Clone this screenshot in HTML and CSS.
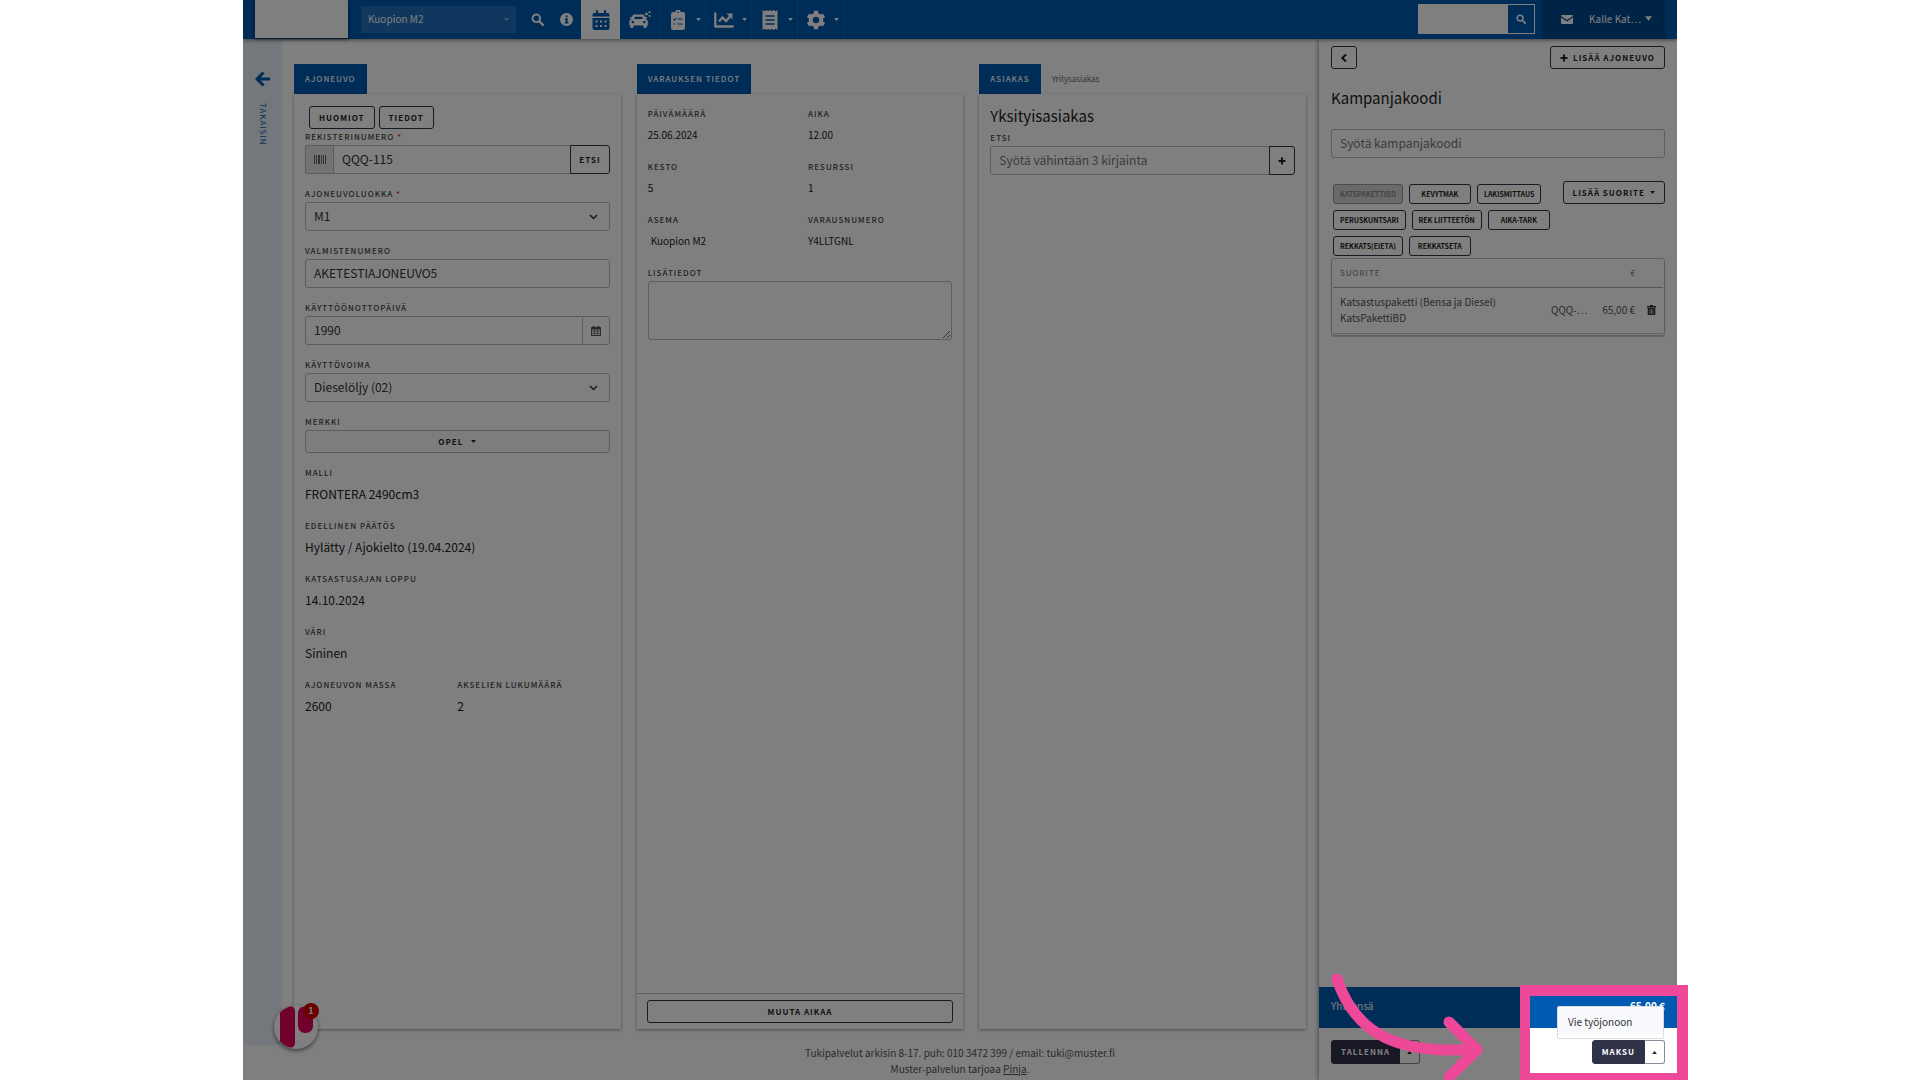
FILE: index.html
```html
<!DOCTYPE html>
<html lang="fi">
<head>
<meta charset="utf-8">
<title>Kuopion M2 – Ajoneuvo</title>
<meta name="viewport" content="width=device-width, initial-scale=1">
<link rel="stylesheet" href="styles.css">
</head>
<body>
<svg class="defs" aria-hidden="true">
  <symbol id="i-search" viewBox="0 0 16 16"><circle cx="6.5" cy="6.5" r="4.7" fill="none" stroke="currentColor" stroke-width="2.4"/><path d="M10 10l4.6 4.6" stroke="currentColor" stroke-width="2.8" stroke-linecap="round"/></symbol>
  <symbol id="i-caret" viewBox="0 0 8 5"><path d="M0 0h8L4 5z" fill="currentColor"/></symbol>
  <symbol id="i-up" viewBox="0 0 8 5"><path d="M0 5h8L4 0z" fill="currentColor"/></symbol>
  <symbol id="i-plus" viewBox="0 0 8 8"><path d="M4 0.5v7M0.5 4h7" stroke="currentColor" stroke-width="2"/></symbol>
</svg>
<div class="stage">
<div class="app">
  <header class="topbar">
    <div class="brand"></div>
    <button class="station" type="button">Kuopion M2<svg class="caret"><use href="#i-caret"/></svg></button>
    <nav class="nav">
      <a class="nav-plain" href="#" aria-label="Haku"><svg class="ic13"><use href="#i-search"/></svg></a>
      <a class="nav-plain" href="#" aria-label="Info"><svg class="ic13" viewBox="0 0 16 16"><circle cx="8" cy="8" r="8" fill="currentColor"/><path d="M7 3h2.4v2.2H7zM6 6.6h3.4v4.6h1v1.6H5.8v-1.6h1V8.2H6z" fill="#005ab0"/></svg></a>
      <a class="nav-tab active" href="#" aria-label="Kalenteri"><svg class="ic20" viewBox="0 0 20 20"><path d="M2.500 3H5V1q0-1 1-1t1 1v2h6V1q0-1 1-1t1 1v2h1.500q2 0 2 1.800V6.500h-17V4.800Q1.500 3 3.500 3zM1.500 8h17v10q0 2-2 2h-13q-2 0-2-2z" fill="currentColor"/><path d="M4.500 10.500h2v2h-2zm4.500 0h2v2H9zm4.500 0h2v2h-2zm-9 4.500h2v2h-2zM9 15h2v2H9zm4.500 0h2v2h-2z" fill="#fff"/></svg></a>
      <a class="nav-tab" href="#" aria-label="Ajoneuvot"><svg class="ic-car" viewBox="0 0 22 18"><path fill-rule="evenodd" d="M5.500 3.500h8q1.500 0 2 1.300L16.800 8q2 .5 2 2.500v4h-1v1.800q0 .7-1.600.7t-1.700-.7v-1.800H4.500v1.800q0 .7-1.700.7t-1.600-.7v-1.800H.3v-4Q.3 8.500 2.200 8l1.300-3.200q.5-1.300 2-1.300zM6 5.700L5 8h9l-1-2.300zM3.800 9.700a1.300 1.300 0 1 0 .01 0zm11.400 0a1.300 1.300 0 1 0 .01 0z" fill="currentColor"/><path d="M1 6h2v1.600H1zm15 0h2v1.600h-2z" fill="currentColor"/><circle cx="17.300" cy="3" r="1.300" fill="currentColor"/><circle cx="20.700" cy="1" r="1" fill="currentColor"/><circle cx="20.700" cy="5" r="1" fill="currentColor"/><path d="M17.300 3l3.400-2M17.300 3l3.400 2" stroke="currentColor" stroke-width=".6"/></svg></a>
      <a class="nav-tab wide" href="#" aria-label="Tehtävät"><svg class="ic20" viewBox="0 0 20 20"><path d="M5 2h2.500a2.500 2.500 0 0 1 5 0H15q2 0 2 2v14q0 2-2 2H5q-2 0-2-2V4q0-2 2-2z" fill="currentColor"/><path d="M5.500 9l1 1 1.600-2M5.500 14h1.600M9.500 9h5M9.500 14h5" stroke="#005ab0" stroke-width="1.200" fill="none"/><circle cx="10" cy="2.500" r=".8" fill="#005ab0"/></svg><svg class="caret"><use href="#i-caret"/></svg></a>
      <a class="nav-tab wide" href="#" aria-label="Raportit"><svg class="ic20" viewBox="0 0 20 20"><path d="M1.300 3.500v13h17.500" stroke="currentColor" stroke-width="2.300" fill="none" stroke-linecap="round" stroke-linejoin="round"/><path d="M5 11.500l3.500-4 3.500 3.500 4-4.500" stroke="currentColor" stroke-width="2.300" fill="none"/><path d="M12.500 3.500h6v6z" fill="currentColor"/></svg><svg class="caret"><use href="#i-caret"/></svg></a>
      <a class="nav-tab wide" href="#" aria-label="Kuitit"><svg class="ic20" viewBox="0 0 20 20"><path d="M2.500 0l2 1.300L6.300 0l1.900 1.300L10 0l1.800 1.300L13.700 0l1.800 1.300 2-1.300v20l-2-1.300-1.800 1.300-1.900-1.300L10 20l-1.800-1.300L6.300 20l-1.800-1.300-2 1.300z" fill="currentColor"/><path d="M5.500 6h9M5.500 10h9M5.500 14h9" stroke="#005ab0" stroke-width="1.300"/></svg><svg class="caret"><use href="#i-caret"/></svg></a>
      <a class="nav-tab wide" href="#" aria-label="Asetukset"><svg class="ic20" viewBox="0 0 20 20"><circle cx="10" cy="10" r="5.300" fill="none" stroke="currentColor" stroke-width="4"/><path d="M10 .8v4M10 15.200v4M2 5.400l3.500 2M14.500 12.600l3.500 2M2 14.600l3.500-2M14.500 7.400l3.500-2" stroke="currentColor" stroke-width="4.200"/></svg><svg class="caret"><use href="#i-caret"/></svg></a>
    </nav>
    <form class="search">
      <input class="search-input" type="text" aria-label="Hae">
      <button class="search-btn" type="button" aria-label="Hae"><svg class="ic10"><use href="#i-search"/></svg></button>
    </form>
    <div class="user">
      <svg class="mail" viewBox="0 0 12 9"><path d="M1 0h10q1 0 1 1L6 5 0 1q0-1 1-1z" fill="currentColor"/><path d="M0 2.400l6 4 6-4V8q0 1-1 1H1Q0 9 0 8z" fill="currentColor"/></svg>
      <button class="user-name" type="button">Kalle Kat…<svg class="caret"><use href="#i-caret"/></svg></button>
    </div>
  </header>

  <a class="back" href="#">
    <svg class="back-arrow" viewBox="0 0 16 16"><path d="M8.500 1.500L2 8l6.500 6.500M2 8h13" fill="none" stroke="currentColor" stroke-width="3"/></svg>
    <span class="back-text">TAKAISIN</span>
  </a>

  <main class="main">
    <section class="panel">
      <div class="tabs"><button class="tab" type="button">AJONEUVO</button></div>
      <div class="card">
        <div class="card-body">
          <div class="btn-row">
            <button class="btn" type="button">HUOMIOT</button>
            <button class="btn" type="button">TIEDOT</button>
          </div>
          <div class="stack">
            <div class="field">
              <label class="label" for="reg">REKISTERINUMERO <span class="req">*</span></label>
              <div class="group">
                <span class="addon"><svg class="barcode" viewBox="0 0 12 9"><path d="M0 0h1v9H0zM2 0h1v9H2zM4 0h2v9H4zM7 0h1v9H7zM9 0h1v9H9zM11 0h1v9h-1z" fill="currentColor"/></svg></span>
                <input class="input" id="reg" type="text" value="QQQ-115">
                <button class="btn attached" type="button">ETSI</button>
              </div>
            </div>
            <div class="field">
              <label class="label" for="cls">AJONEUVOLUOKKA <span class="req">*</span></label>
              <select class="input select" id="cls"><option>M1</option></select>
            </div>
            <div class="field">
              <label class="label" for="vin">VALMISTENUMERO</label>
              <input class="input" id="vin" type="text" value="AKETESTIAJONEUVO5">
            </div>
            <div class="field">
              <label class="label" for="date">KÄYTTÖÖNOTTOPÄIVÄ</label>
              <div class="group">
                <input class="input" id="date" type="text" value="1990">
                <button class="btn attached light" type="button" aria-label="Valitse päivä"><svg class="ic10" viewBox="0 0 10 10"><path d="M.5 1.500h9v8h-9z" fill="none" stroke="currentColor"/><path d="M.5 2.500h9M2.500 0v2M7.500 0v2" stroke="currentColor" stroke-width="1.800"/><path d="M.5 5h9M.5 7.300h9M3.500 3v6.500M6.500 3v6.500" stroke="currentColor" stroke-width=".7"/></svg></button>
              </div>
            </div>
            <div class="field">
              <label class="label" for="fuel">KÄYTTÖVOIMA</label>
              <select class="input select" id="fuel"><option>Dieselöljy (02)</option></select>
            </div>
            <div class="field">
              <span class="label">MERKKI</span>
              <button class="btn make" type="button">OPEL<svg class="caret"><use href="#i-caret"/></svg></button>
            </div>
            <div class="info"><span class="label">MALLI</span><span class="value">FRONTERA 2490cm3</span></div>
            <div class="info"><span class="label">EDELLINEN PÄÄTÖS</span><span class="value">Hylätty / Ajokielto (19.04.2024)</span></div>
            <div class="info"><span class="label">KATSASTUSAJAN LOPPU</span><span class="value">14.10.2024</span></div>
            <div class="info"><span class="label">VÄRI</span><span class="value">Sininen</span></div>
            <div class="cols">
              <div class="info"><span class="label">AJONEUVON MASSA</span><span class="value">2600</span></div>
              <div class="info"><span class="label">AKSELIEN LUKUMÄÄRÄ</span><span class="value">2</span></div>
            </div>
          </div>
        </div>
      </div>
    </section>

    <section class="panel">
      <div class="tabs"><button class="tab" type="button">VARAUKSEN TIEDOT</button></div>
      <div class="card">
        <div class="card-body">
          <div class="stack">
            <div class="cols gap small">
              <div class="info"><span class="label">PÄIVÄMÄÄRÄ</span><span class="value">25.06.2024</span></div>
              <div class="info"><span class="label">AIKA</span><span class="value">12.00</span></div>
              <div class="info"><span class="label">KESTO</span><span class="value">5</span></div>
              <div class="info"><span class="label">RESURSSI</span><span class="value">1</span></div>
              <div class="info"><span class="label">ASEMA</span><span class="value inset">Kuopion M2</span></div>
              <div class="info"><span class="label">VARAUSNUMERO</span><span class="value">Y4LLTGNL</span></div>
            </div>
            <div class="field">
              <label class="label" for="more">LISÄTIEDOT</label>
              <textarea class="input area" id="more"></textarea>
            </div>
          </div>
        </div>
        <div class="card-foot"><button class="btn" type="button">MUUTA AIKAA</button></div>
      </div>
    </section>

    <section class="panel">
      <div class="tabs"><button class="tab" type="button">ASIAKAS</button><button class="tab idle" type="button">Yritysasiakas</button></div>
      <div class="card">
        <div class="card-body">
          <h2 class="title">Yksityisasiakas</h2>
          <div class="field">
            <label class="label" for="cust">ETSI</label>
            <div class="group">
              <input class="input" id="cust" type="text" placeholder="Syötä vähintään 3 kirjainta">
              <button class="btn attached" type="button" aria-label="Lisää asiakas"><svg class="ic8"><use href="#i-plus"/></svg></button>
            </div>
          </div>
        </div>
      </div>
    </section>
  </main>

  <footer class="footer">
    <p>Tukipalvelut arkisin 8-17. puh: 010 3472 399 / email: tuki@muster.fi</p>
    <p>Muster-palvelun tarjoaa <a href="#">Pinja</a>.</p>
  </footer>

  <aside class="order">
    <div class="order-body">
      <div class="between">
        <button class="btn square" type="button" aria-label="Takaisin"><svg class="ic8" viewBox="0 0 8 8"><path d="M6 .5L2.300 4 6 7.500" fill="none" stroke="currentColor" stroke-width="2"/></svg></button>
        <button class="btn" type="button"><svg class="ic8"><use href="#i-plus"/></svg>LISÄÄ AJONEUVO</button>
      </div>
      <h2 class="title">Kampanjakoodi</h2>
      <input class="input" type="text" aria-label="Kampanjakoodi" placeholder="Syötä kampanjakoodi">
      <div class="picks">
        <div class="chips">
          <button class="chip" type="button" disabled>KATSPAKETTIBD</button>
          <button class="chip" type="button">KEVYTMAK</button>
          <button class="chip" type="button">LAKISMITTAUS</button>
          <button class="chip" type="button">PERUSKUNTSARI</button>
          <button class="chip" type="button">REK LIITTEETÖN</button>
          <button class="chip" type="button">AIKA-TARK</button>
          <button class="chip" type="button">REKKATS(EIETA)</button>
          <button class="chip" type="button">REKKATSETA</button>
        </div>
        <button class="btn" type="button">LISÄÄ SUORITE<svg class="caret"><use href="#i-caret"/></svg></button>
      </div>
      <div class="table-box">
        <table class="table">
          <thead><tr><th class="c-name">SUORITE</th><th class="c-reg"></th><th class="c-price">€</th><th class="c-del"></th></tr></thead>
          <tbody><tr><td>Katsastuspaketti (Bensa ja Diesel)<br>KatsPakettiBD</td><td>QQQ-…</td><td class="c-price">65,00 €</td><td><button class="trash" type="button" aria-label="Poista"><svg class="ic9" viewBox="0 0 9 10"><path d="M0 1h3V0h3v1h3v1.500H0zM.7 3h7.600v7H.7z" fill="currentColor"/><path d="M3 4v5M4.500 4v5M6 4v5" stroke="#fff" stroke-width=".6"/></svg></button></td></tr></tbody>
        </table>
      </div>
    </div>
    <div class="total"><span>Yhteensä</span><strong>65,00 €</strong></div>
    <div class="actions">
      <div class="split"><button class="btn dark" type="button">TALLENNA</button><button class="btn more" type="button" aria-label="Lisää"><svg class="caret"><use href="#i-up"/></svg></button></div>
      <div class="split"><button class="btn dark" type="button">MAKSU</button><button class="btn more" type="button" aria-label="Lisää"><svg class="caret"><use href="#i-up"/></svg></button>
        <div class="menu"><a class="menu-item" href="#">Vie työjonoon</a></div>
      </div>
    </div>
  </aside>

  <button class="chat" type="button" aria-label="Chat"><svg class="chat-logo" viewBox="0 0 44 44"><defs><clipPath id="round"><circle cx="22" cy="22" r="21.500"/></clipPath></defs><circle cx="22" cy="22" r="21.500" fill="#fff"/><g clip-path="url(#round)" fill="#e2005a"><rect x="6" y="1" width="15" height="42" rx="5"/><rect x="24" y="1" width="15" height="27" rx="7"/></g></svg><span class="badge">1</span></button>
  <div class="spotlight"></div>
</div>
<div class="frame"></div>
<svg class="pointer" viewBox="0 0 160 116"><path d="M11 15C30 72 74 91 151 85M123 58L151 86 123 113" fill="none" stroke="#ee4899" stroke-width="11" stroke-linecap="round" stroke-linejoin="round"/></svg>
</div>
</body>
</html>
```
FILE: styles.css
```css
* { box-sizing: border-box; }
body { margin: 0; background: #fff; }
body, button, input, select, textarea { font-family: "Noto Sans CJK SC", "Noto Sans", sans-serif; font-size: 12px; color: #333; }
button { cursor: pointer; }
a { color: inherit; }
p, h2 { margin: 0; }
svg { display: block; flex: none; }
.defs { position: absolute; width: 0; height: 0; }

.stage { position: relative; min-height: 100vh; padding: 0 243px; overflow: hidden; }
.app {
  position: relative; isolation: isolate; overflow: hidden; min-height: 100vh; background: #fff;
  display: grid; grid-template-columns: 39px minmax(0, 1fr) 358px; grid-template-rows: 39px 1fr 35px;
}

.topbar { grid-column: 1 / -1; display: flex; align-items: stretch; background: #005ab0; color: #fff; padding: 0 12px; box-shadow: 0 1px 4px rgba(0,0,0,.5); z-index: 1; }
.brand { width: 93px; height: 38px; background: #fff; box-shadow: 0 1px 3px rgba(0,0,0,.6); }
.station { display: flex; align-items: center; justify-content: space-between; width: 155px; height: 27px; margin: 6px 0 0 13px; padding: 0 7px 1px; border: 0; background: #2070bc; color: #fff; font-size: 10px; line-height: 16px; }
.station .caret { opacity: .5; }
.caret { width: 5px; height: 3px; }
.nav { display: flex; flex: 1; margin-left: 7px; }
.nav a { color: #fff; display: flex; align-items: center; justify-content: center; }
.nav-plain { width: 29px; }
.nav .nav-tab { width: 40px; border-right: 1px solid #1467b7; }
.nav .wide { width: 46px; justify-content: space-between; padding: 0 4px 0 8px; }
.nav .active { width: 39px; border: 0; background: #fff; color: #005ab0; }
.ic8 { width: 8px; height: 8px; }
.ic9 { width: 9px; height: 10px; }
.ic10 { width: 10px; height: 10px; }
.ic13 { width: 13px; height: 13px; }
.ic20 { width: 20px; height: 20px; }
.ic-car { width: 22px; height: 18px; }
.search { display: flex; width: 117px; height: 30px; margin-top: 4px; border: 1px solid #fff; }
.search-input { flex: 1; min-width: 0; border: 0; padding: 0 6px; background: #fff; }
.search-btn { width: 26px; padding: 0; border: 0; background: transparent; color: #fff; display: flex; align-items: center; justify-content: center; }
.user { display: flex; align-items: center; justify-content: space-between; width: 123px; margin-left: 7px; padding: 0 13px 0 19px; background: #00488d; }
.mail { width: 12px; height: 9px; }
.user-name { display: flex; align-items: center; gap: 4px; padding: 0 0 2px; border: 0; background: none; color: #fff; font-size: 10px; line-height: 16px; }
.user-name .caret { width: 7px; height: 5px; }

.back { grid-column: 1; grid-row: 2; background: #e8f1f8; color: #005ab0; text-decoration: none; display: flex; flex-direction: column; align-items: center; gap: 16px; padding-top: 32px; }
.back-arrow { width: 16px; height: 16px; }
.back-text { writing-mode: vertical-rl; font-size: 8px; line-height: 12px; letter-spacing: 1px; }

.main { grid-column: 2; grid-row: 2; display: grid; grid-template-columns: repeat(3, minmax(0, 1fr)); gap: 16px; padding: 25px 13px 16px 12px; }
.panel { display: flex; flex-direction: column; }
.tabs { display: flex; height: 30px; }
.tab { padding: 0 11px; border: 0; background: #005ab0; color: #fff; font-size: 8px; line-height: 12px; letter-spacing: 1px; font-weight: 500; }
.idle { background: none; color: #666; letter-spacing: normal; font-weight: 400; }
.card { flex: 1; display: flex; flex-direction: column; background: #fff; box-shadow: 0 1px 3px rgba(0,0,0,.4); }
.card-body { flex: 1; padding: 12px 11px; }
.card-foot { border-top: 1px solid #bbb; padding: 6px 10px; display: grid; }
.stack { display: flex; flex-direction: column; gap: 12px; }
.btn-row { display: flex; gap: 4px; padding-left: 4px; }
.btn { height: 23px; display: flex; align-items: center; justify-content: center; gap: 5px; padding: 0 9px; border: 1px solid #30324a; border-radius: 3px; background: #fff; color: #222; font-size: 8px; line-height: 12px; letter-spacing: 1px; font-weight: 700; white-space: nowrap; }
.label { display: block; font-size: 8px; line-height: 16px; letter-spacing: 1px; font-weight: 500; color: #444; }
.req { color: #d22; }
.value { display: block; margin: 2px 0 1px; line-height: 22px; color: #222; }
.small .value { font-size: 10px; }
.inset { padding-left: 3px; }
.cols { display: grid; grid-template-columns: 1fr 1fr; row-gap: 12px; }
.gap { column-gap: 16px; }
.input { display: block; width: 100%; height: 29px; margin: 0; padding: 0 8px 2px; border: 1px solid #bbb; border-radius: 3px; background: #fff; line-height: 20px; }
.input::placeholder { color: #777; opacity: 1; }
.select { appearance: none; background: #fff url("data:image/svg+xml,%3Csvg xmlns='http://www.w3.org/2000/svg' viewBox='0 0 9 6'%3E%3Cpath d='M1 1l3.500 3.500L8 1' fill='none' stroke='%23333' stroke-width='1.500'/%3E%3C/svg%3E") no-repeat right 11px center / 9px 6px; }
.area { height: 59px; resize: vertical; }
.group { display: flex; }
.group .input { flex: 1; min-width: 0; border-radius: 3px 0 0 3px; }
.addon { display: flex; align-items: center; justify-content: center; width: 28px; border: 1px solid #bbb; border-right: 0; border-radius: 3px 0 0 3px; background: #e5e7ea; color: #666; }
.addon + .input { border-radius: 0; }
.barcode { width: 12px; height: 9px; }
.attached { height: 29px; margin-left: -1px; padding: 0 8px; border-radius: 0 3px 3px 0; }
.light { border-color: #bbb; color: #555; }
.make { width: 100%; border-color: #bbb; background: #f8fcfa; gap: 8px; }
.title { font-size: 15px; line-height: 20px; font-weight: 400; margin-bottom: 4px; color: #222; }

.footer { grid-column: 1 / -1; grid-row: 3; text-align: center; font-size: 10px; line-height: 16px; color: #555; }

.order { grid-column: 3; grid-row: 2 / 4; display: flex; flex-direction: column; background: #fff; box-shadow: -1px 0 4px rgba(0,0,0,.4); }
.order-body { flex: 1; padding: 7px 12px; }
.between { display: flex; justify-content: space-between; }
.square { width: 26px; padding: 0; }
.order .title { margin: 19px 0 21px; }
.picks { display: flex; align-items: flex-start; justify-content: space-between; margin: 23px 0 2px; }
.chips { display: flex; flex-wrap: wrap; gap: 6px; width: 224px; padding: 3px 0 0 2px; }
.chip { min-width: 62px; height: 20px; padding: 0 6px; border: 1px solid #30324a; border-radius: 3px; background: #fff; color: #222; font-size: 7px; line-height: 12px; font-weight: 700; }
.chip:disabled { background: #d4d4d4; border-color: #999; color: #888; }
.table-box { border: 1px solid #bbb; border-radius: 3px; padding: 1px; box-shadow: 0 1px 1px rgba(0,0,0,.2); }
.table { width: 100%; table-layout: fixed; border-collapse: collapse; font-size: 10px; line-height: 16px; color: #555; }
.table th { height: 27px; padding: 0 7px; text-align: left; font-size: 8px; font-weight: 400; letter-spacing: 1px; color: #777; border-bottom: 1px solid #aaa; }
.table td { height: 46px; padding: 0 0 0 3px; white-space: nowrap; border-bottom: 1px solid #ccc; }
.table td:first-child { padding-left: 7px; }
.c-reg { width: 47px; }
.table .c-price { width: 45px; text-align: right; padding: 0 5px 0 0; letter-spacing: normal; }
.c-del { width: 23px; }
.trash { padding: 0 0 0 4px; border: 0; background: none; display: block; }
.total { display: flex; justify-content: space-between; align-items: center; height: 41px; padding: 0 12px 4px; background: #005ab0; color: #fff; font-size: 10px; line-height: 16px; }
.actions { display: flex; justify-content: space-between; align-items: flex-start; height: 52px; padding: 12px 12px 0; }
.split { position: relative; display: flex; }
.split .btn { height: 24px; }
.split .dark { background: #30324a; color: #fff; border-radius: 3px 0 0 3px; }
.split .more { width: 20px; padding: 0; border-color: #888a99; border-left: 0; border-radius: 0 3px 3px 0; }
.menu { position: absolute; right: 1px; bottom: 25px; width: 107px; padding: 1px 0 3px; background: #fff; border: 1px solid #ddd; border-radius: 2px; }
.menu-item { display: block; padding: 5px 10px 4px; background: #f7f9fc; font-size: 10px; line-height: 18px; text-decoration: none; }

.chat { position: absolute; left: 31px; bottom: 31px; width: 44px; height: 44px; padding: 0; border: 0; border-radius: 50%; background: none; box-shadow: 0 2px 4px rgba(0,0,0,.5); }
.chat-logo { width: 44px; height: 44px; }
.badge { position: absolute; top: -2px; right: -1px; width: 16px; height: 16px; border-radius: 50%; background: #d40000; color: #fff; font-size: 9px; line-height: 16px; font-weight: 700; }
.spotlight { position: absolute; right: 0; bottom: 7px; width: 147px; height: 77px; box-shadow: 0 0 0 3000px rgba(0,0,0,.5); z-index: 2; pointer-events: none; }
.frame { position: absolute; right: 232px; bottom: -4px; width: 168px; height: 99px; border: 11px solid #ee4899; border-width: 11px 11px 11px 10px; pointer-events: none; }
.pointer { position: absolute; right: 434px; bottom: 0; width: 160px; height: 116px; pointer-events: none; }
```
